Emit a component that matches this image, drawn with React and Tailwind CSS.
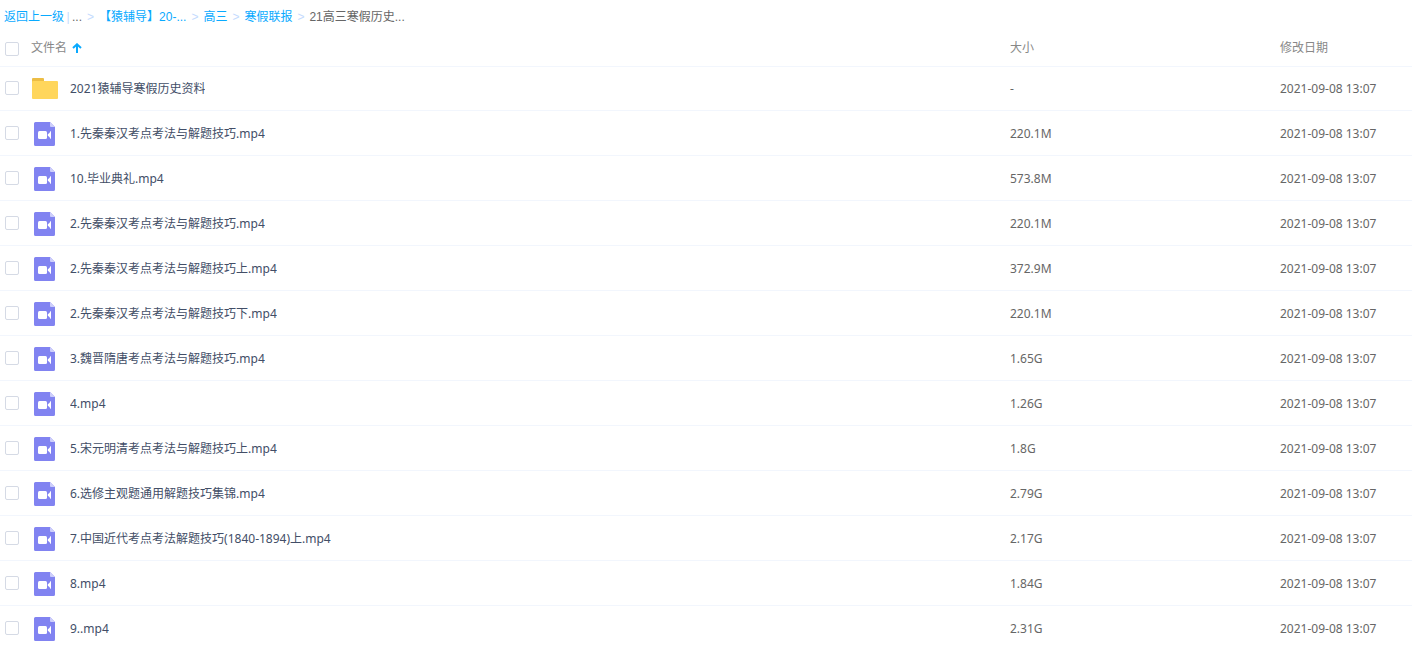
import React, { useState } from "react";

const crumbs = [
  { label: "【猿辅导】20-..." },
  { label: "高三" },
  { label: "寒假联报" },
];

const files = [
  { name: "2021猿辅导寒假历史资料", size: "-", folder: true },
  { name: "1.先秦秦汉考点考法与解题技巧.mp4", size: "220.1M" },
  { name: "10.毕业典礼.mp4", size: "573.8M" },
  { name: "2.先秦秦汉考点考法与解题技巧.mp4", size: "220.1M" },
  { name: "2.先秦秦汉考点考法与解题技巧上.mp4", size: "372.9M" },
  { name: "2.先秦秦汉考点考法与解题技巧下.mp4", size: "220.1M" },
  { name: "3.魏晋隋唐考点考法与解题技巧.mp4", size: "1.65G" },
  { name: "4.mp4", size: "1.26G" },
  { name: "5.宋元明清考点考法与解题技巧上.mp4", size: "1.8G" },
  { name: "6.选修主观题通用解题技巧集锦.mp4", size: "2.79G" },
  { name: "7.中国近代考点考法解题技巧(1840-1894)上.mp4", size: "2.17G" },
  { name: "8.mp4", size: "1.84G" },
  { name: "9..mp4", size: "2.31G" },
];

const FolderIcon = () => (
  <svg width="26" height="21" viewBox="0 0 26 21" aria-hidden="true">
    <path d="M0 6V1a1 1 0 0 1 1-1h10a1 1 0 0 1 1 1v5z" fill="#ecbd45" />
    <rect y="3" width="26" height="18" rx="1" fill="#ffd65c" />
  </svg>
);

const VideoIcon = () => (
  <svg width="22" height="26" viewBox="0 -2 22 26" aria-hidden="true">
    <path d="M1.5 0H16l5 5v17.5a1.5 1.5 0 0 1-1.5 1.5h-18A1.5 1.5 0 0 1 0 22.5v-21A1.5 1.5 0 0 1 1.5 0z" fill="#8183f1" />
    <path d="M16 0l5 5h-4a1 1 0 0 1-1-1z" fill="#cdcefb" />
    <rect x="4" y="9" width="9" height="8" rx="1.5" fill="#fff" />
    <path d="M13.8 12.3Q15.8 11.4 16.4 9.2q.6-.3.6.5v6.6q0 .8-.6.5Q15.8 14.6 13.8 13.7z" fill="#fff" />
  </svg>
);

const Checkbox = ({ label, checked, onChange }) => (
  <input
    type="checkbox"
    aria-label={label}
    checked={checked}
    onChange={onChange}
    className="block size-3.5 shrink-0 appearance-none rounded-xs border border-[#d5dae5] bg-white checked:border-[#09aaff] checked:bg-[#09aaff]"
  />
);

const Separator = () => <span className="w-[17px] text-center text-[#c4dbfe]">&gt;</span>;

const App = () => {
  const [selected, setSelected] = useState([]);

  const toggle = (name) => {
    setSelected(
      selected.includes(name) ? selected.filter((n) => n !== name) : [...selected, name]
    );
  };

  const allSelected = selected.length === files.length;

  return (
    <div className="bg-white text-xs text-[#666666] font-['Noto_Sans','Noto_Sans_CJK_SC',sans-serif]">
      <nav className="flex h-8 items-center whitespace-nowrap pl-1 pt-0.5 font-['Liberation_Sans','Noto_Sans_CJK_SC',sans-serif]">
        <a href="#" className="text-[#09aaff]">返回上一级</a>
        <span className="w-2 text-center text-[#c4dbfe]">|</span>
        <span>...</span>
        {crumbs.map((crumb) => (
          <React.Fragment key={crumb.label}>
            <Separator />
            <a href="#" className="text-[#09aaff]">{crumb.label}</a>
          </React.Fragment>
        ))}
        <Separator />
        <span>21高三寒假历史...</span>
      </nav>

      <table className="w-full table-fixed border-collapse text-left">
        <colgroup>
          <col />
          <col className="w-[270px]" />
          <col className="w-[132px]" />
        </colgroup>
        <thead>
          <tr className="h-[34px] border-b border-[#f2f6fd] text-[#888888]">
            <th className="pl-[5px] font-normal">
              <div className="flex items-center gap-3">
                <Checkbox
                  label="全选"
                  checked={allSelected}
                  onChange={() => setSelected(allSelected ? [] : files.map((f) => f.name))}
                />
                <button className="flex items-center gap-[5px] pb-0.5">
                  文件名
                  <svg width="10" height="10" viewBox="0 0 10 10" aria-hidden="true">
                    <path d="M5 10V1.5M1 5L5 1.3L9 5" fill="none" stroke="#09aaff" strokeWidth="2" />
                  </svg>
                </button>
              </div>
            </th>
            <th className="pb-0.5 font-normal">大小</th>
            <th className="pb-0.5 font-normal">修改日期</th>
          </tr>
        </thead>
        <tbody>
          {files.map((file) => (
            <tr
              key={file.name}
              className={`border-b border-[#f2f6fd] ${file.folder ? "h-11" : "h-[45px]"}`}
            >
              <td className="pl-[5px]">
                <div className="flex items-center">
                  <Checkbox
                    label={file.name}
                    checked={selected.includes(file.name)}
                    onChange={() => toggle(file.name)}
                  />
                  <span className="ml-3 mr-[11px] flex w-7 justify-center">
                    {file.folder ? <FolderIcon /> : <VideoIcon />}
                  </span>
                  <a href="#" className="truncate pt-0.5 text-[#424e67]">{file.name}</a>
                </div>
              </td>
              <td className="pt-0.5">{file.size}</td>
              <td className="whitespace-nowrap pt-0.5">2021-09-08 13:07</td>
            </tr>
          ))}
        </tbody>
      </table>
    </div>
  );
};

export default App;
